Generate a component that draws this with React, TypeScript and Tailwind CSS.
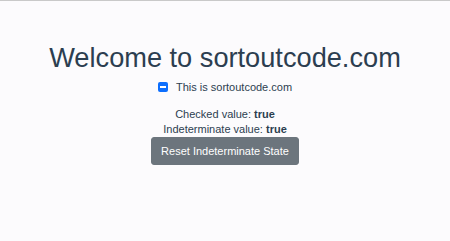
import React, { useState } from 'react';

const App: React.FC = () => {
  const [checked, setChecked] = useState(true);
  const [indeterminate, setIndeterminate] = useState(true);

  const toggle = () => {
    setIndeterminate(false);
    setChecked(!checked);
  };

  return (
    <div className="min-h-screen w-full bg-[#fcfbfd] border-t border-[#c9c9c9] text-center text-[#2c3e50] font-['Liberation_Sans',Arial,sans-serif]">
      <div className="flex flex-col items-center pt-[41px]">
        <h1 className="text-[27.2px] leading-[32px] font-normal">Welcome to sortoutcode.com</h1>

        {/* Checkbox row */}
        <label className="mt-[5px] flex items-center gap-[8px] text-[11px] leading-[16px] cursor-pointer" onClick={toggle}>
          <span
            role="checkbox"
            aria-checked={indeterminate ? 'mixed' : checked}
            className={`flex h-[10px] w-[10px] items-center justify-center rounded-[2px] ${checked || indeterminate ? 'bg-[#0d6efd]' : 'border border-[#aaa] bg-white'}`}
          >
            {indeterminate && <span className="block h-[1.5px] w-[6px] bg-white" />}
          </span>
          <span>This is sortoutcode.com</span>
        </label>

        <div className="mt-[12px] text-[11px] leading-[15px]">
          <p>
            Checked value: <b>{String(checked)}</b>
          </p>
          <p>
            Indeterminate value: <b>{String(indeterminate)}</b>
          </p>
        </div>

        <button
          onClick={() => setIndeterminate(true)}
          className="flex h-[28px] items-center rounded-[3px] border border-[#6c757d] bg-[#6c757d] px-[9px] text-[11px] leading-[16px] text-white"
        >
          Reset Indeterminate State
        </button>
      </div>
    </div>
  );
};

export default App;
